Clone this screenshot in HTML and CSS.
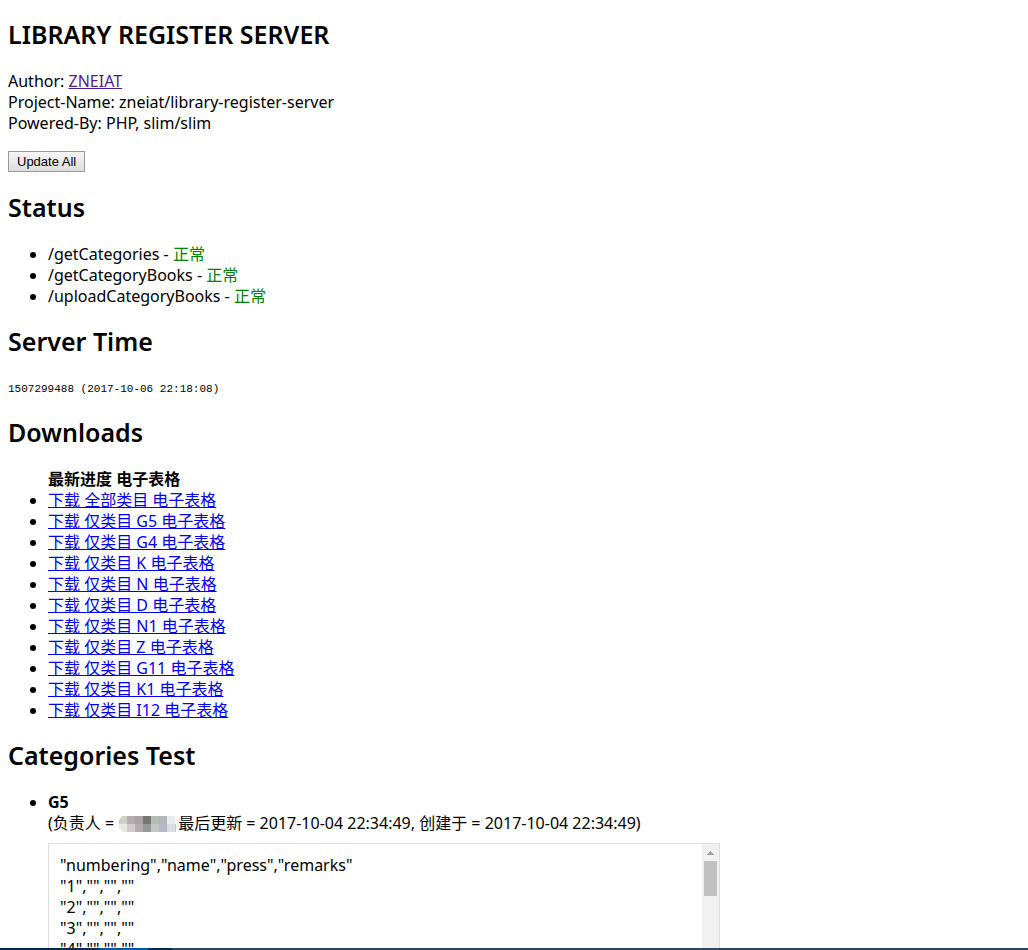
FILE: index.html
```html
<!DOCTYPE html>
<html lang="zh-CN">
<head>
<meta charset="utf-8">
<title>Library Register Server</title>
<link rel="stylesheet" href="styles.css">
</head>
<body>
<main class="page">
  <h2 class="heading">LIBRARY REGISTER SERVER</h2>
  <p class="about">
    Author: <a class="visited" href="#author">ZNEIAT</a><br>
    Project-Name: zneiat/library-register-server<br>
    Powered-By: PHP, slim/slim
  </p>
  <button class="update" type="button">Update All</button>

  <h2 class="heading">Status</h2>
  <ul class="list">
    <li>/getCategories - <span class="ok">正常</span></li>
    <li>/getCategoryBooks - <span class="ok">正常</span></li>
    <li>/uploadCategoryBooks - <span class="ok">正常</span></li>
  </ul>

  <h2 class="heading">Server Time</h2>
  <pre class="time">1507299488 (2017-10-06 22:18:08)</pre>

  <h2 class="heading">Downloads</h2>
  <ul class="list">
    <li class="list-title">最新进度 电子表格</li>
    <li><a href="#all">下载 全部类目 电子表格</a></li>
    <li><a href="#g5">下载 仅类目 G5 电子表格</a></li>
    <li><a href="#g4">下载 仅类目 G4 电子表格</a></li>
    <li><a href="#k">下载 仅类目 K 电子表格</a></li>
    <li><a href="#n">下载 仅类目 N 电子表格</a></li>
    <li><a href="#d">下载 仅类目 D 电子表格</a></li>
    <li><a href="#n1">下载 仅类目 N1 电子表格</a></li>
    <li><a href="#z">下载 仅类目 Z 电子表格</a></li>
    <li><a href="#g11">下载 仅类目 G11 电子表格</a></li>
    <li><a href="#k1">下载 仅类目 K1 电子表格</a></li>
    <li><a href="#i12">下载 仅类目 I12 电子表格</a></li>
  </ul>

  <h2 class="heading">Categories Test</h2>
  <ul class="list">
    <li>
      <b>G5</b><br>
      (负责人 =<svg class="mosaic" viewBox="0 0 57 16" aria-hidden="true">
        <path fill="#d0cfcb" d="M3 0h5v8H0V4z"/><path fill="#b2aeaf" d="M8 0h8v8H8z"/><path fill="#aaa2aa" d="M16 0h8v8h-8z"/><path fill="#757770" d="M24 0h8v8h-8z"/><path fill="#b4bcb9" d="M32 0h8v8h-8z"/><path fill="#b2b8ba" d="M40 0h8v8h-8z"/><path fill="#e9ebef" d="M48 0h8l1 8h-9z"/>
        <path fill="#e6e6e2" d="M0 8h8v8H4L0 12z"/><path fill="#d0cccb" d="M8 8h8v8H8z"/><path fill="#b5acaf" d="M16 8h8v8h-8z"/><path fill="#96979b" d="M24 8h8v8h-8z"/><path fill="#c4c7c4" d="M32 8h8v8h-8z"/><path fill="#b9b7c5" d="M40 8h8v8h-8z"/><path fill="#dcdde2" d="M48 8h8v8h-8z"/><path fill="#c9c9c6" d="M56 8h1v8h-1z"/>
      </svg>最后更新 = 2017-10-04 22:34:49, 创建于 = 2017-10-04 22:34:49)
      <div class="data">
        <pre class="csv">"numbering","name","press","remarks"
"1","","",""
"2","","",""
"3","","",""
"4","","",""</pre>
        <div class="scrollbar">
          <svg class="arrow" viewBox="0 0 7 4" aria-hidden="true"><path fill="#a3a3a3" d="M3 0h1v1h1v1h1v1h1v1H0V3h1V2h1V1h1z"/></svg>
          <div class="thumb"></div>
        </div>
      </div>
    </li>
  </ul>
</main>
<div class="taskbar"></div>
</body>
</html>
```

FILE: styles.css
```css
body {
  margin: 0;
  height: 100vh;
  display: flex;
  flex-direction: column;
  background: #fff;
  color: #000;
  font: 16px/21px "Noto Sans", "Noto Sans CJK SC", sans-serif;
}

.page {
  flex: 1;
  min-height: 0;
  overflow: hidden;
  padding: 0 8px;
}

.heading {
  margin: 19px 0 22px;
  font-size: 25px;
  line-height: 30px;
  font-weight: 600;
}

.about {
  margin: 0 0 17px;
}

a {
  color: #0000ee;
}

.visited {
  color: #551a8b;
}

.update {
  display: block;
  box-sizing: border-box;
  height: 21px;
  padding: 0 8px;
  margin-bottom: 20px;
  border: 1px solid #999;
  border-radius: 0;
  background: linear-gradient(#f6f6f6, #dddddd);
  color: #000;
  font: 13px/18px "Liberation Sans", Arial, sans-serif;
}

.list {
  margin: 20px 0 19px;
  padding-left: 40px;
}

.list-title {
  list-style: none;
  font-weight: 700;
}

.ok {
  color: #008000;
}

.time {
  margin: 24px 0 19px;
  font: 11px/18px "Liberation Mono", monospace;
}

.mosaic {
  width: 57px;
  height: 16px;
  margin: 0 2px 0 5px;
  vertical-align: -3px;
}

.data {
  display: flex;
  box-sizing: border-box;
  max-width: 672px;
  height: 300px;
  margin-top: 9px;
  border: 1px solid #ddd;
}

.csv {
  flex: 1;
  margin: 0;
  padding: 11px;
  overflow: hidden;
  font: inherit;
}

.scrollbar {
  width: 17px;
  background: #f1f1f1;
}

.arrow {
  display: block;
  width: 7px;
  height: 4px;
  margin: 7px auto 6px;
}

.thumb {
  height: 35px;
  margin: 0 2px;
  background: #c1c1c1;
}

.taskbar {
  height: 2px;
  background: linear-gradient(90deg, #002c52 0 100px, #005a9e 100px 148px, #002c52 148px 172px, #264a66 172px);
}
```
